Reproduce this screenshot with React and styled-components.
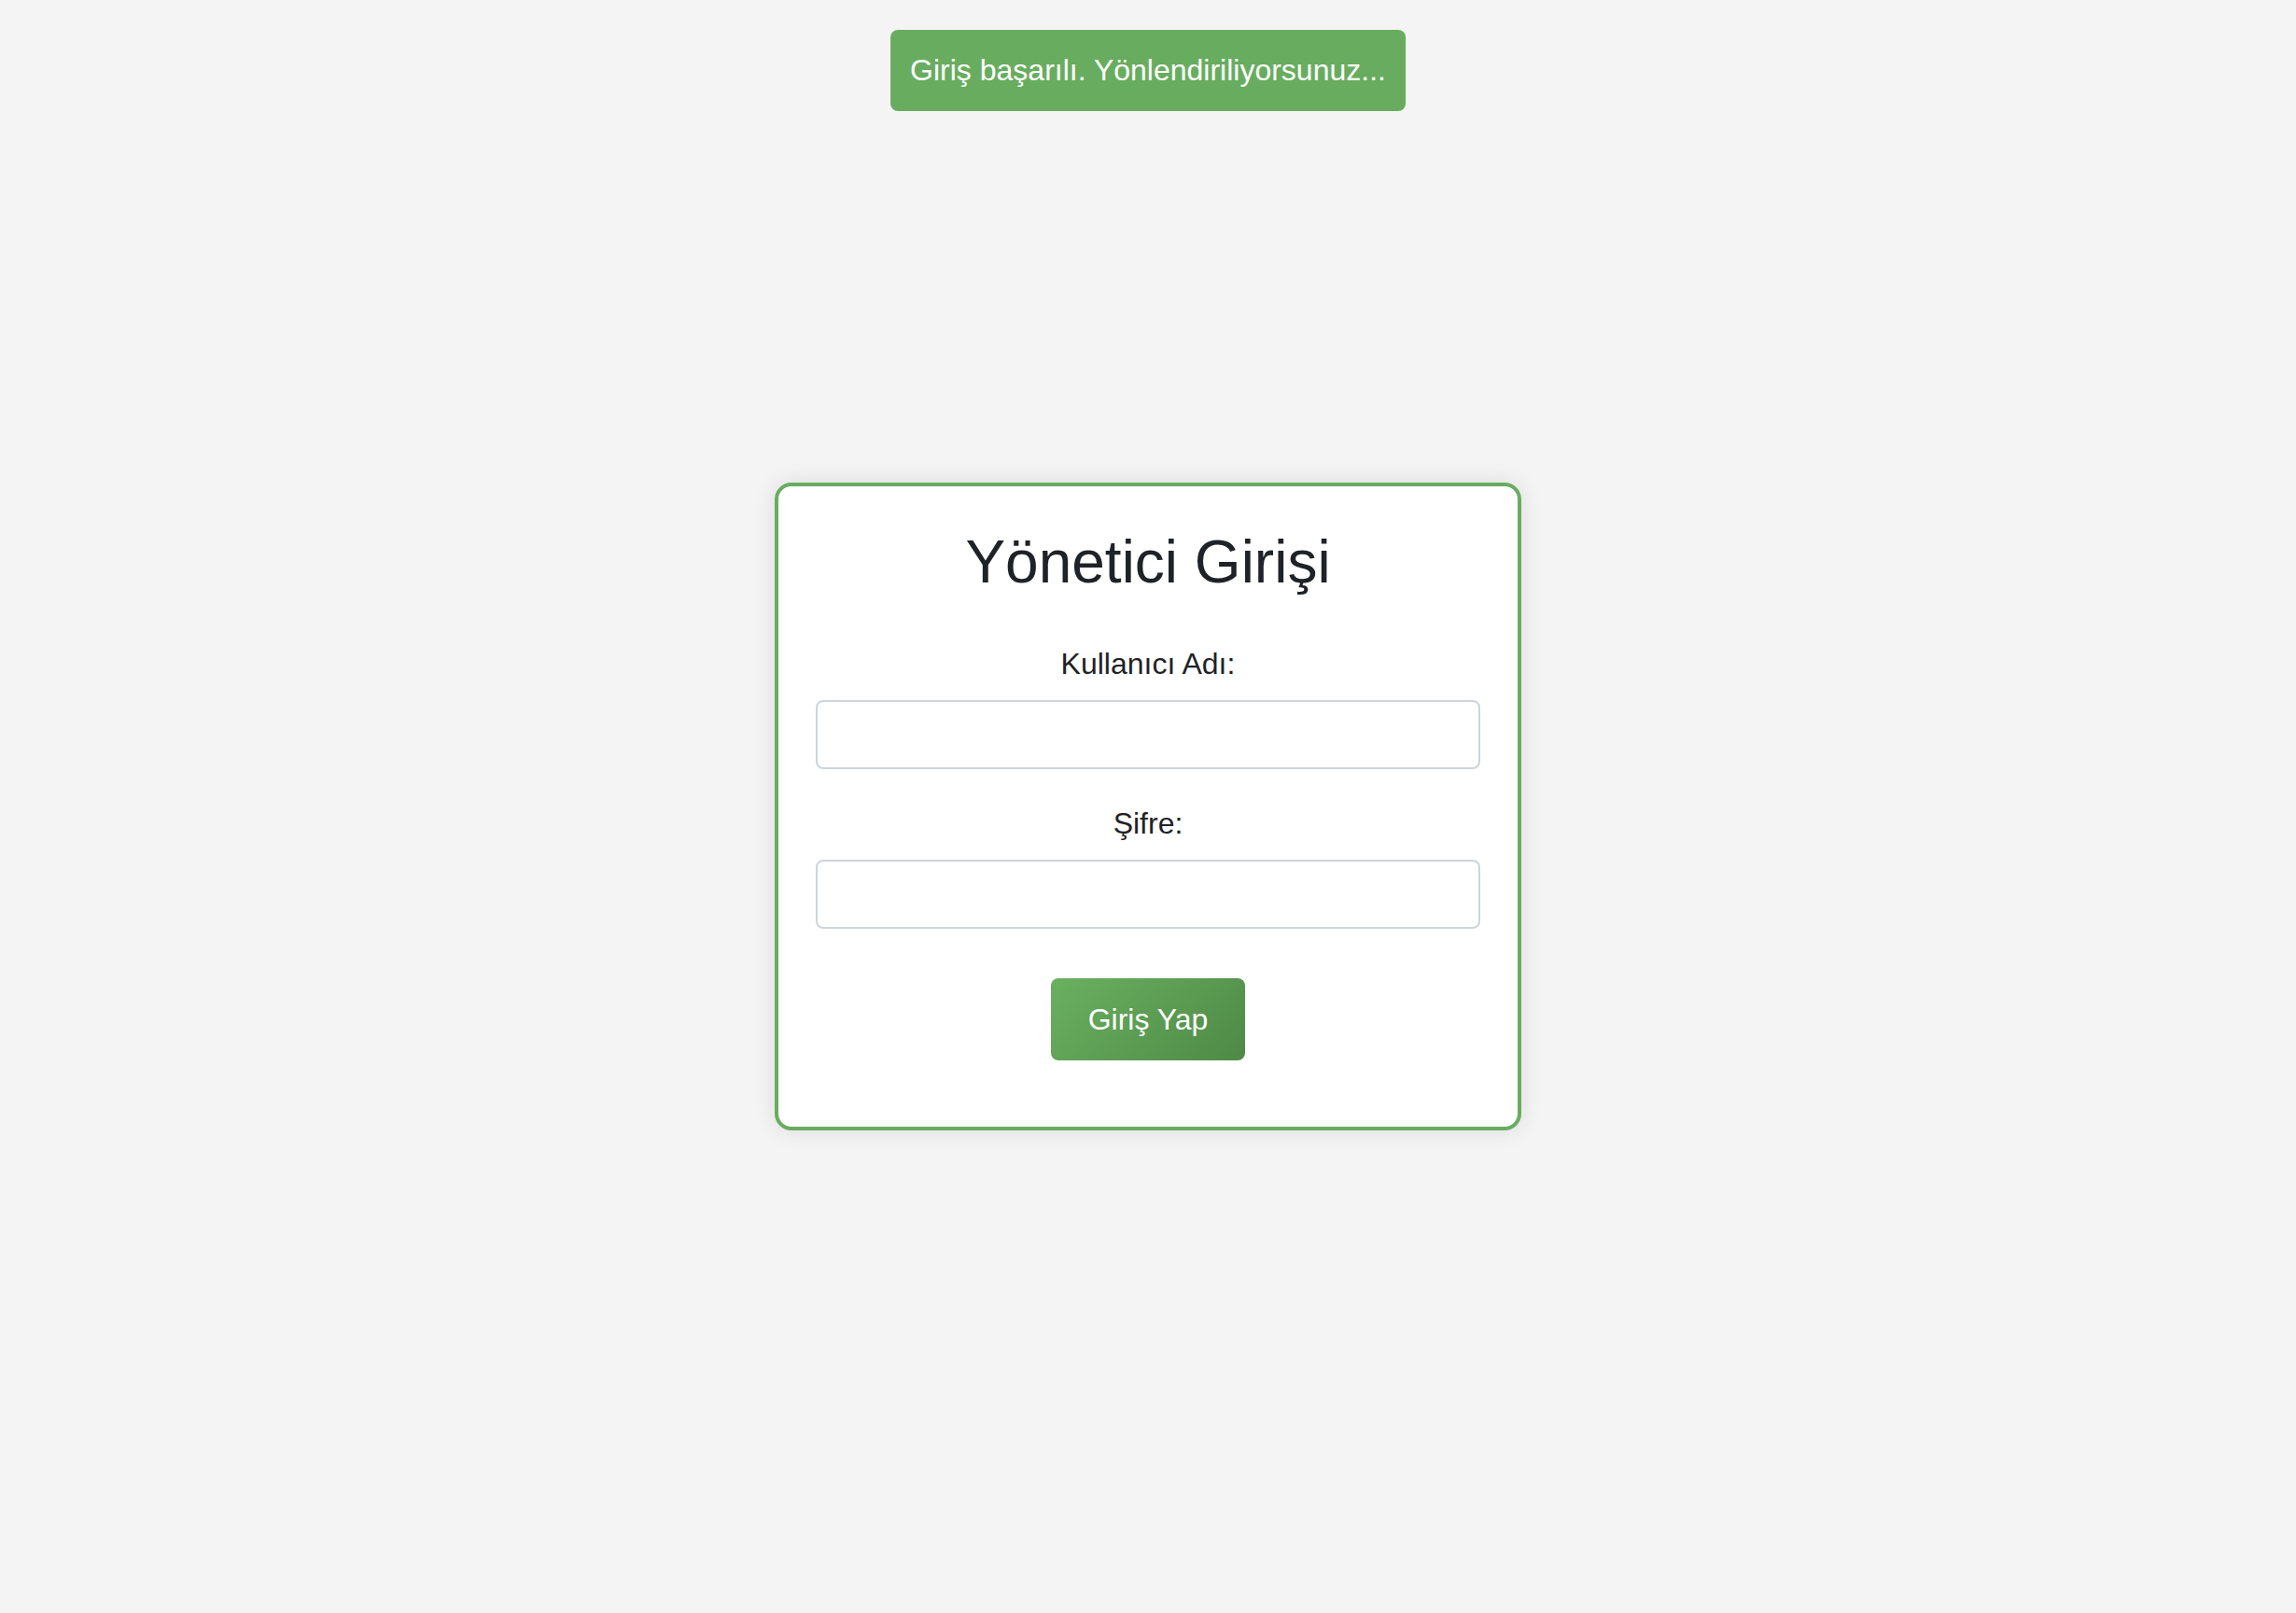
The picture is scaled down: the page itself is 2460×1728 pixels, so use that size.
import React from "react";
import styled, { createGlobalStyle } from "styled-components";

const GlobalStyle = createGlobalStyle`
  html, body {
    margin: 0;
    padding: 0;
    background: #f4f4f4;
    font-family: "Liberation Sans", Arial, sans-serif;
  }
`;

const Page = styled.div`
  min-height: 100vh;
  display: flex;
  align-items: center;
  justify-content: center;
`;

const Toast = styled.div`
  position: fixed;
  top: 32px;
  left: 50%;
  transform: translateX(-50%);
  height: 87px;
  display: flex;
  align-items: center;
  padding: 0 21px;
  background: #68ad5f;
  color: #ffffff;
  font-size: 32px;
  border-radius: 8px;
  white-space: nowrap;
`;

const Card = styled.form`
  width: 800px;
  box-sizing: border-box;
  background: #ffffff;
  border: 4px solid #68ad5f;
  border-radius: 18px;
  padding: 44px 40px 71px;
  box-shadow: 0 0 24px rgba(0, 0, 0, 0.1);
  text-align: center;
`;

const Title = styled.h2`
  margin: 0 0 54px;
  font-size: 64px;
  font-weight: 400;
  line-height: 74px;
  color: #1f2226;
`;

const Field = styled.div`
  margin-bottom: ${(p) => (p.last ? "53px" : "40px")};
`;

const Label = styled.label`
  display: block;
  font-size: 32px;
  line-height: 37px;
  color: #1f2226;
  margin-bottom: 20px;
`;

const Input = styled.input`
  display: block;
  width: 100%;
  height: 74px;
  box-sizing: border-box;
  border: 2px solid #ced4da;
  border-radius: 8px;
  background: #ffffff;
  font-size: 32px;
  padding: 0 16px;
  outline: none;
`;

const Button = styled.button`
  width: 208px;
  height: 88px;
  border: none;
  border-radius: 8px;
  background: linear-gradient(135deg, #6ab060 0%, #4e8a46 100%);
  color: #ffffff;
  font-family: "Liberation Sans", Arial, sans-serif;
  font-size: 32px;
  cursor: pointer;
`;

const App = () => {
  return (
    <>
      <GlobalStyle />
      <Toast>Giriş başarılı. Yönlendiriliyorsunuz...</Toast>
      <Page>
        <Card onSubmit={(e) => e.preventDefault()}>
          <Title>Yönetici Girişi</Title>
          <Field>
            <Label htmlFor="username">Kullanıcı Adı:</Label>
            <Input id="username" type="text" />
          </Field>
          <Field last>
            <Label htmlFor="password">Şifre:</Label>
            <Input id="password" type="password" />
          </Field>
          <Button type="submit">Giriş Yap</Button>
        </Card>
      </Page>
    </>
  );
};

export default App;
